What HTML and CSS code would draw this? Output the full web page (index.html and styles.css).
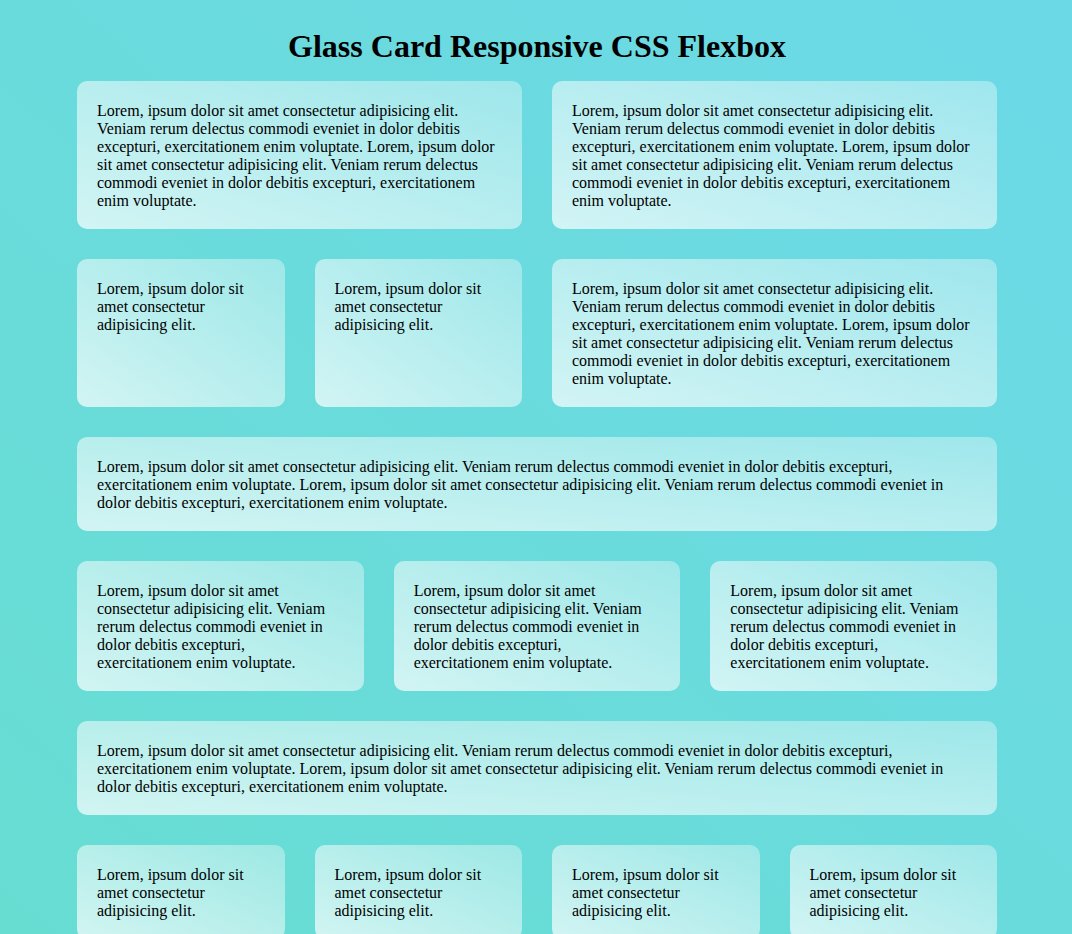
FILE: index.html
```html
<!DOCTYPE html>
<html lang="en">
<head>
<meta charset="utf-8">
<title>Glass Card Responsive CSS Flexbox</title>
<link rel="stylesheet" href="styles.css">
</head>
<body>
<h1 class="title">Glass Card Responsive CSS Flexbox</h1>
<main class="container">
  <div class="card half">Lorem, ipsum dolor sit amet consectetur adipisicing elit. Veniam rerum delectus commodi eveniet in dolor debitis excepturi, exercitationem enim voluptate. Lorem, ipsum dolor sit amet consectetur adipisicing elit. Veniam rerum delectus commodi eveniet in dolor debitis excepturi, exercitationem enim voluptate.</div>
  <div class="card half">Lorem, ipsum dolor sit amet consectetur adipisicing elit. Veniam rerum delectus commodi eveniet in dolor debitis excepturi, exercitationem enim voluptate. Lorem, ipsum dolor sit amet consectetur adipisicing elit. Veniam rerum delectus commodi eveniet in dolor debitis excepturi, exercitationem enim voluptate.</div>

  <div class="card quarter">Lorem, ipsum dolor sit amet consectetur adipisicing elit.</div>
  <div class="card quarter">Lorem, ipsum dolor sit amet consectetur adipisicing elit.</div>
  <div class="card half">Lorem, ipsum dolor sit amet consectetur adipisicing elit. Veniam rerum delectus commodi eveniet in dolor debitis excepturi, exercitationem enim voluptate. Lorem, ipsum dolor sit amet consectetur adipisicing elit. Veniam rerum delectus commodi eveniet in dolor debitis excepturi, exercitationem enim voluptate.</div>

  <div class="card full">Lorem, ipsum dolor sit amet consectetur adipisicing elit. Veniam rerum delectus commodi eveniet in dolor debitis excepturi, exercitationem enim voluptate. Lorem, ipsum dolor sit amet consectetur adipisicing elit. Veniam rerum delectus commodi eveniet in dolor debitis excepturi, exercitationem enim voluptate.</div>

  <div class="card third">Lorem, ipsum dolor sit amet consectetur adipisicing elit. Veniam rerum delectus commodi eveniet in dolor debitis excepturi, exercitationem enim voluptate.</div>
  <div class="card third">Lorem, ipsum dolor sit amet consectetur adipisicing elit. Veniam rerum delectus commodi eveniet in dolor debitis excepturi, exercitationem enim voluptate.</div>
  <div class="card third">Lorem, ipsum dolor sit amet consectetur adipisicing elit. Veniam rerum delectus commodi eveniet in dolor debitis excepturi, exercitationem enim voluptate.</div>

  <div class="card full">Lorem, ipsum dolor sit amet consectetur adipisicing elit. Veniam rerum delectus commodi eveniet in dolor debitis excepturi, exercitationem enim voluptate. Lorem, ipsum dolor sit amet consectetur adipisicing elit. Veniam rerum delectus commodi eveniet in dolor debitis excepturi, exercitationem enim voluptate.</div>

  <div class="card quarter">Lorem, ipsum dolor sit amet consectetur adipisicing elit.</div>
  <div class="card quarter">Lorem, ipsum dolor sit amet consectetur adipisicing elit.</div>
  <div class="card quarter">Lorem, ipsum dolor sit amet consectetur adipisicing elit.</div>
  <div class="card quarter">Lorem, ipsum dolor sit amet consectetur adipisicing elit.</div>
</main>
</body>
</html>
```
FILE: styles.css
```css
html, body {
  margin: 0;
}
body {
  min-height: 100vh;
  padding: 0 0 40px 2px;
  box-sizing: border-box;
  font-family: "Liberation Serif", "Times New Roman", serif;
  font-size: 16px;
  color: #000;
  background: linear-gradient(to top right, #67ddd2, #6cd9e7);
  background-attachment: fixed;
}
.title {
  margin: 0;
  padding: 28px 0 17px;
  font-size: 32px;
  font-weight: bold;
  line-height: 36px;
  text-align: center;
}
.container {
  width: 920px;
  margin: 0 auto;
  display: grid;
  grid-template-columns: repeat(12, 1fr);
  gap: 30px;
}
.card {
  padding: 21px 20px 19px;
  line-height: 18px;
  border-radius: 10px;
  background: linear-gradient(to top right, rgba(255, 255, 255, 0.7), rgba(255, 255, 255, 0.35));
}
.full { grid-column: span 12; }
.half { grid-column: span 6; }
.third { grid-column: span 4; }
.quarter { grid-column: span 3; }
```
